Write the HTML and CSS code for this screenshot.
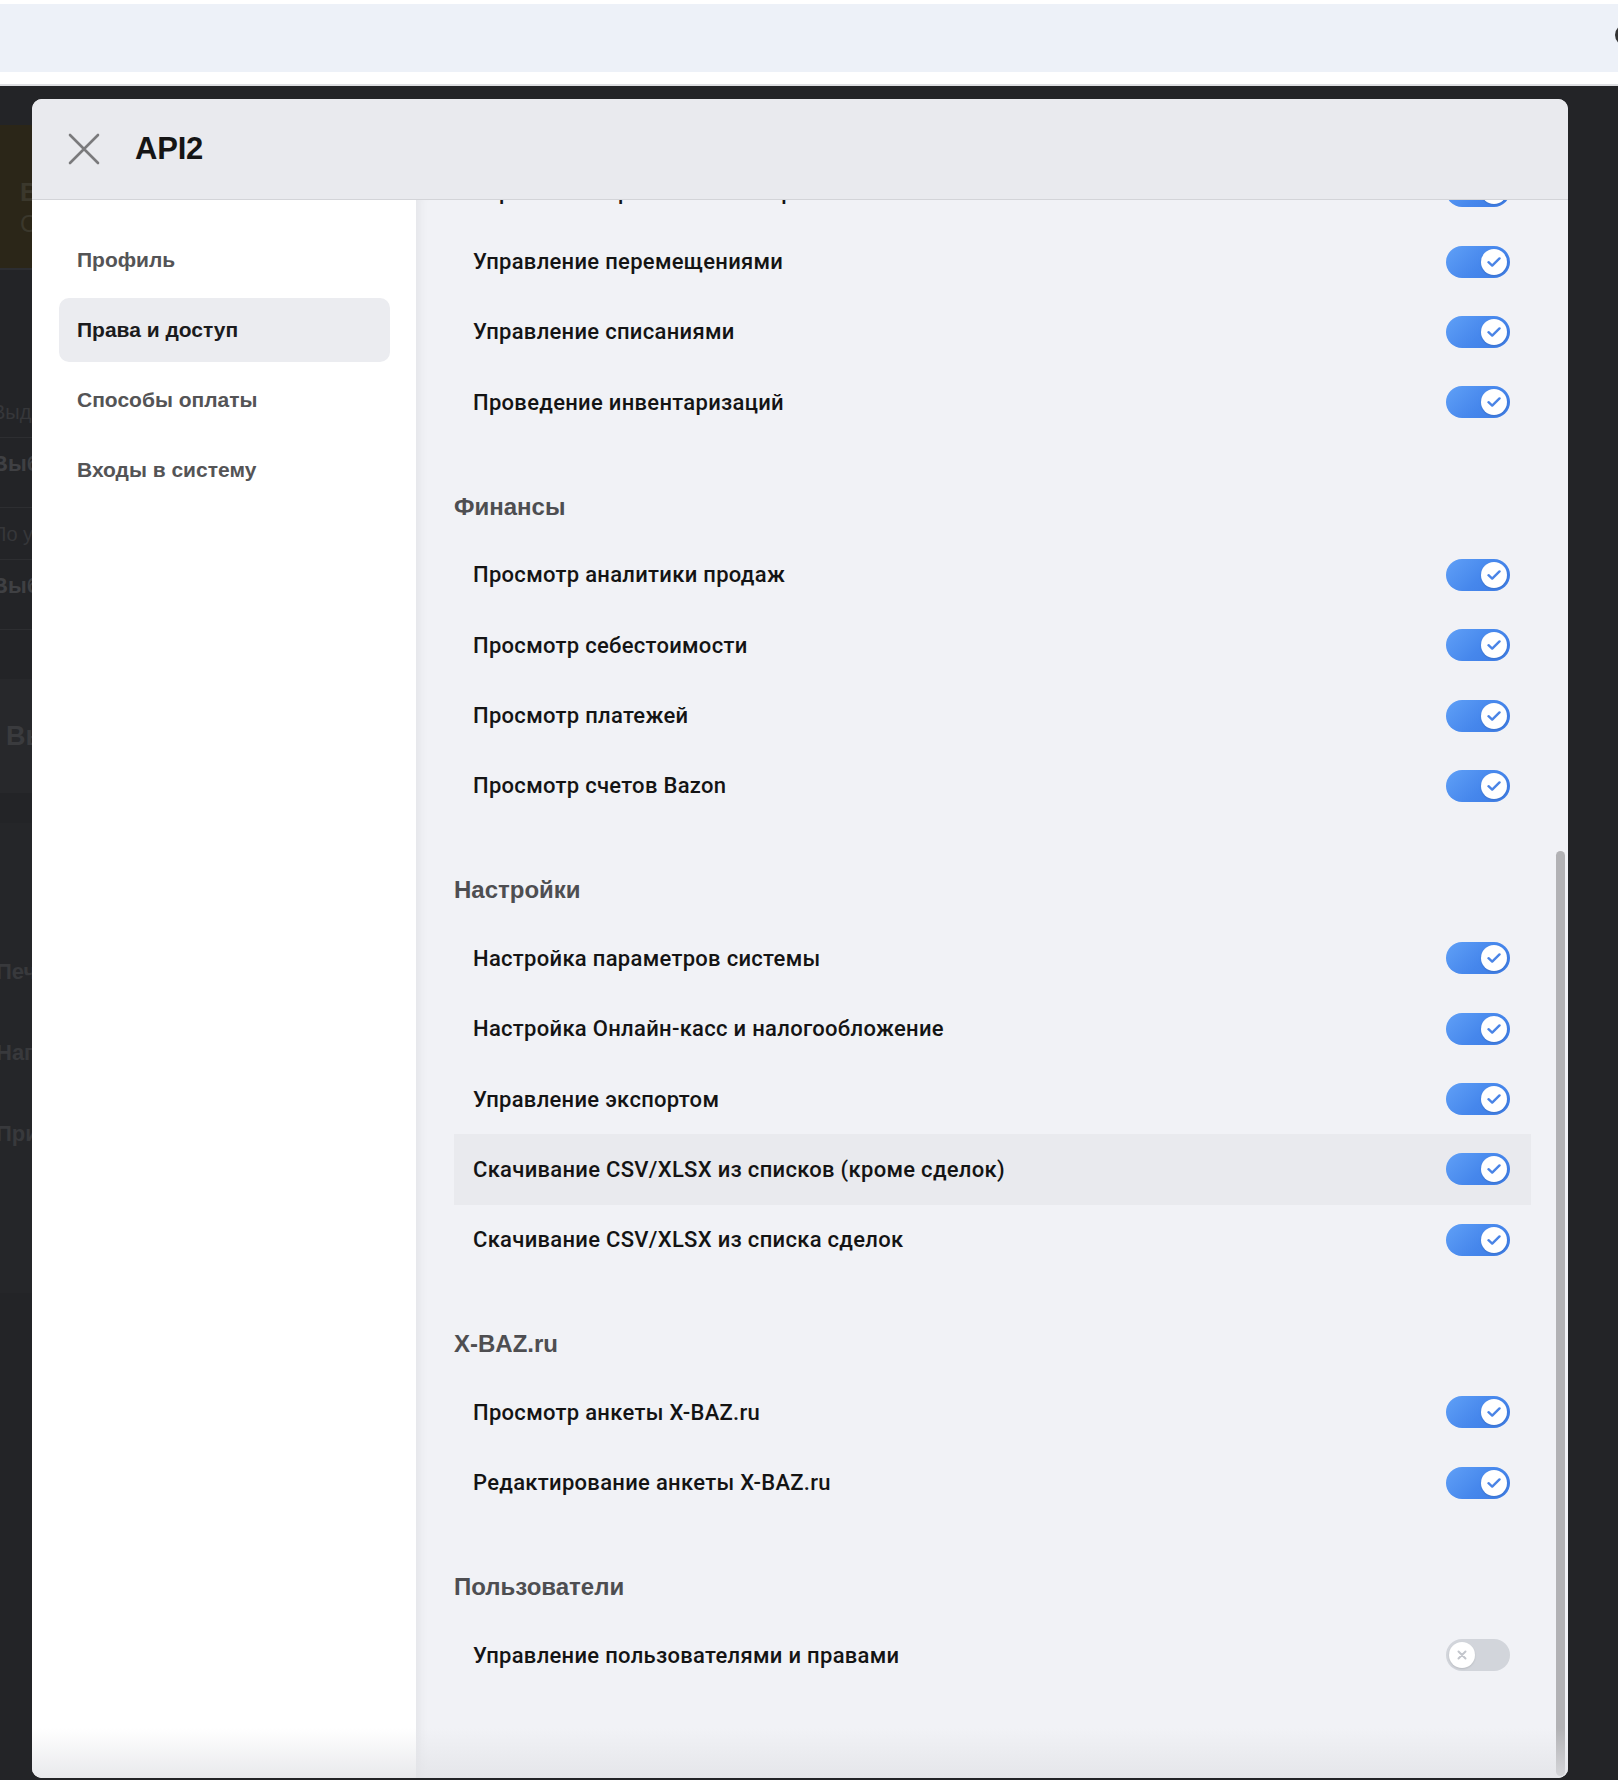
FILE: index.html
```html
<!DOCTYPE html>
<html lang="ru">
<head>
<meta charset="utf-8">
<title>API2</title>
<link rel="stylesheet" href="styles.css">
</head>
<body>
<div class="topstrip">
  <div class="topbar"><span class="topbar-ring"></span></div>
</div>
<div class="stage">
  <div class="behind">
    <div class="b-promo"><span class="b-promo-t">Вход</span><span class="b-promo-s">Сейчас</span></div>
    <div class="b-gap"></div>
    <div class="b-label">Выдача</div>
    <div class="b-value">Выбрать</div>
    <div class="b-label">По умолчанию</div>
    <div class="b-value">Выбрать</div>
    <div class="b-gap2"></div>
    <div class="b-band"><span class="b-big">Выход</span></div>
    <div class="b-items">
      <div class="b-item">Печать</div>
      <div class="b-item">Напиток</div>
      <div class="b-item">Прием</div>
    </div>
  </div>

  <div class="modal">
    <div class="modal-head">
      <svg class="close" width="32" height="32" viewBox="0 0 32 32"><path d="M2 2 L30 30 M30 2 L2 30" stroke="#7a7a7c" stroke-width="2.6" fill="none" stroke-linecap="round"/></svg>
      <h1 class="title">API2</h1>
    </div>
    <div class="modal-body">
      <nav class="side">
        <div class="nav-item">Профиль</div>
        <div class="nav-item active">Права и доступ</div>
        <div class="nav-item">Способы оплаты</div>
        <div class="nav-item">Входы в систему</div>
      </nav>
      <div class="pane">
        <div class="list">
          <div class="row"><span>Управление приёмками товаров</span><i class="tg on"></i></div>
          <div class="row"><span>Управление перемещениями</span><i class="tg on"></i></div>
          <div class="row"><span>Управление списаниями</span><i class="tg on"></i></div>
          <div class="row"><span>Проведение инвентаризаций</span><i class="tg on"></i></div>

          <h2 class="sec">Финансы</h2>
          <div class="row"><span>Просмотр аналитики продаж</span><i class="tg on"></i></div>
          <div class="row"><span>Просмотр себестоимости</span><i class="tg on"></i></div>
          <div class="row"><span>Просмотр платежей</span><i class="tg on"></i></div>
          <div class="row"><span>Просмотр счетов Bazon</span><i class="tg on"></i></div>

          <h2 class="sec">Настройки</h2>
          <div class="row"><span>Настройка параметров системы</span><i class="tg on"></i></div>
          <div class="row"><span>Настройка Онлайн-касс и налогообложение</span><i class="tg on"></i></div>
          <div class="row"><span>Управление экспортом</span><i class="tg on"></i></div>
          <div class="row hover"><span>Скачивание CSV/XLSX из списков (кроме сделок)</span><i class="tg on"></i></div>
          <div class="row"><span>Скачивание CSV/XLSX из списка сделок</span><i class="tg on"></i></div>

          <h2 class="sec">X-BAZ.ru</h2>
          <div class="row"><span>Просмотр анкеты X-BAZ.ru</span><i class="tg on"></i></div>
          <div class="row"><span>Редактирование анкеты X-BAZ.ru</span><i class="tg on"></i></div>

          <h2 class="sec">Пользователи</h2>
          <div class="row"><span>Управление пользователями и правами</span><i class="tg off"></i></div>
        </div>
        <div class="scrollbar"></div>
      </div>
      <div class="fade"></div>
    </div>
  </div>
</div>
</body>
</html>
```

FILE: styles.css
```css
* { box-sizing: border-box; }
html, body { margin: 0; padding: 0; }
body {
  width: 1618px;
  height: 1780px;
  overflow: hidden;
  background: #232427;
  font-family: "Liberation Sans", Arial, sans-serif;
}

/* top browser-ish strip */
.topstrip {
  height: 86px;
  background: #ffffff;
  padding-top: 4px;
  border-bottom: 2px solid #dedfe2;
}
.topbar {
  height: 68px;
  background: #edf1f8;
  display: flex;
  align-items: center;
  justify-content: flex-end;
  overflow: hidden;
}
.topbar-ring {
  width: 22px;
  height: 22px;
  border-radius: 50%;
  border: 3px solid #333;
  margin-right: -19px;
  margin-top: -6px;
}

.stage {
  display: flex;
  height: 1694px;
}

/* dimmed page behind the overlay */
.behind {
  width: 32px;
  flex: none;
  overflow: hidden;
  white-space: nowrap;
  color: #3c3d40;
  font-weight: 700;
}
.b-promo {
  margin-top: 39px;
  height: 145px;
  background: #2b2618;
  display: flex;
  flex-direction: column;
  padding: 52px 0 0 20px;
  border-bottom: 2px solid #2c2d31;
}
.b-promo-t { font-size: 26px; color: #3b382c; line-height: 30px; }
.b-promo-s { font-size: 24px; color: #3b382c; font-weight: 400; line-height: 34px; }
.b-gap { height: 116px; }
.b-label {
  height: 52px;
  line-height: 52px;
  font-size: 20px;
  font-weight: 400;
  margin-left: -8px;
  color: #36373a;
  border-bottom: 1px solid #2d2e31;
}
.b-value {
  height: 70px;
  line-height: 52px;
  font-size: 22px;
  margin-left: -8px;
  color: #3f4043;
  border-bottom: 1px solid #2d2e31;
}
.b-gap2 { height: 49px; }
.b-band {
  height: 114px;
  background: #27282b;
  display: flex;
  align-items: center;
  padding-left: 6px;
}
.b-big { font-size: 27px; color: #3a3b3e; }
.b-items {
  margin-top: 30px;
  padding-top: 129px;
  height: 470px;
  background: #252629;
}
.b-item {
  height: 81px;
  line-height: 40px;
  font-size: 22px;
  margin-left: -4px;
  color: #38393c;
}

/* modal */
.modal {
  width: 1536px;
  flex: none;
  margin-top: 13px;
  height: 1679px;
  border-radius: 10px;
  overflow: hidden;
  background: #f1f2f6;
  display: flex;
  flex-direction: column;
}
.modal-head {
  height: 101px;
  flex: none;
  background: #e9eaee;
  border-bottom: 1px solid #d3d4d8;
  display: flex;
  align-items: center;
  padding-left: 36px;
  gap: 35px;
}
.close { flex: none; }
.title {
  margin: 0;
  font-size: 31px;
  font-weight: 700;
  color: #151515;
  letter-spacing: -0.2px;
}
.modal-body {
  flex: 1;
  display: flex;
  position: relative;
  min-height: 0;
}
.side {
  width: 384px;
  flex: none;
  background: #ffffff;
  padding: 28px 26px 0 27px;
  display: flex;
  flex-direction: column;
  gap: 6px;
}
.nav-item {
  height: 64px;
  border-radius: 10px;
  display: flex;
  align-items: center;
  padding-left: 18px;
  font-size: 21px;
  font-weight: 700;
  color: #545456;
}
.nav-item.active {
  background: #ebecf0;
  color: #1b1b1d;
}

.pane {
  flex: 1;
  position: relative;
  overflow: hidden;
  background: #f1f2f6;
  box-shadow: inset 12px 0 12px -10px rgba(0, 0, 0, 0.07);
  padding: 0 37px 0 38px;
}
.list {
  margin-top: -44px;
  display: flex;
  flex-direction: column;
}
.row {
  height: 70.4px;
  flex: none;
  display: flex;
  align-items: center;
  justify-content: space-between;
  padding: 0 21px 0 19px;
  font-family: Roboto, "Liberation Sans", sans-serif;
  font-weight: 500;
  font-size: 22px;
  letter-spacing: 0.3px;
  color: #141414;
}
.row.hover { background: #e9eaee; }
.sec {
  margin: 0;
  padding: 52px 0 16px 0;
  line-height: 34px;
  font-size: 24px;
  font-weight: 700;
  color: #4e4e51;
}

/* toggles */
.tg {
  width: 64px;
  height: 32px;
  border-radius: 16px;
  position: relative;
  flex: none;
  display: block;
}
.tg::after {
  content: "";
  position: absolute;
  top: 3px;
  width: 26px;
  height: 26px;
  border-radius: 50%;
  background-color: #fff;
  background-repeat: no-repeat;
  background-position: center;
  box-shadow: 0 1px 2px rgba(0, 0, 0, 0.12);
}
.tg.on {
  background: linear-gradient(135deg, #60a0f7 0%, #4687ec 55%, #3d7be3 100%);
}
.tg.on::after {
  right: 3px;
  background-image: url("data:image/svg+xml,%3Csvg xmlns='http://www.w3.org/2000/svg' width='14' height='12' viewBox='0 0 14 12'%3E%3Cpath d='M1.5 6.2 L5.2 9.6 L12.5 2.4' stroke='%234a84e6' stroke-width='2.4' fill='none' stroke-linecap='round' stroke-linejoin='round'/%3E%3C/svg%3E");
}
.tg.off { background: #d2d5db; }
.tg.off::after {
  left: 3px;
  background-image: url("data:image/svg+xml,%3Csvg xmlns='http://www.w3.org/2000/svg' width='10' height='10' viewBox='0 0 10 10'%3E%3Cpath d='M1.5 1.5 L8.5 8.5 M8.5 1.5 L1.5 8.5' stroke='%23c3c6cc' stroke-width='2' fill='none' stroke-linecap='round'/%3E%3C/svg%3E");
}

.scrollbar {
  position: absolute;
  right: 3px;
  top: 651px;
  bottom: 2px;
  width: 9px;
  border-radius: 5px;
  background: #b2b2b5;
}
.fade {
  position: absolute;
  left: 0;
  right: 0;
  bottom: 0;
  height: 50px;
  pointer-events: none;
  background: linear-gradient(to bottom, rgba(230, 231, 235, 0), rgba(225, 226, 230, 0.75));
}
```
